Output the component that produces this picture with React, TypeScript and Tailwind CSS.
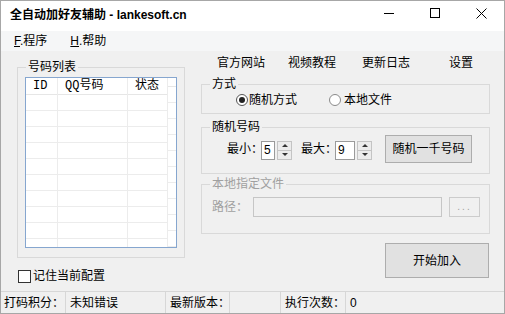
import React from 'react';

const rows = Array.from({ length: 10 });

function SpinBox({ value, width }: { value: string; width: string }) {
  return (
    <div className="flex items-center gap-[2px]">
      <div className={`${width} shrink-0 h-[19px] border border-[#9a9a9a] bg-white flex items-center pl-[2px] text-[12px]`}>
        {value}
      </div>
      <div className="w-[15px] shrink-0 h-[19px] border border-[#c4c4c4] bg-[#ececec] flex flex-col">
        <div className="flex-1 flex items-center justify-center border-b border-[#c4c4c4]">
          <div className="w-0 h-0 border-l-[3px] border-r-[3px] border-b-[3px] border-l-transparent border-r-transparent border-b-[#333]" />
        </div>
        <div className="flex-1 flex items-center justify-center">
          <div className="w-0 h-0 border-l-[3px] border-r-[3px] border-t-[3px] border-l-transparent border-r-transparent border-t-[#333]" />
        </div>
      </div>
    </div>
  );
}

function Column({ title, width, last }: { title: string; width: string; last?: boolean }) {
  return (
    <div className={`${width} shrink-0 flex flex-col ${last ? '' : 'border-r border-[#ececec]'}`}>
      <div className="h-[24px] border-b border-[#e6e6e6] flex items-center pl-[7px] text-[12px] font-['Liberation_Mono','Noto_Sans_CJK_SC',monospace]">
        {title}
      </div>
      {rows.map((_, i) => (
        <div key={i} className="h-[16px] shrink-0 border-b border-[#ececec]" />
      ))}
    </div>
  );
}

export default function App() {
  return (
    <div className="w-[505px] h-[314px] border border-[#a7a7a7] bg-[#f0f0f0] flex flex-col overflow-hidden text-[12px] leading-[16px] text-black font-['Liberation_Sans','Noto_Sans_CJK_SC',sans-serif]">
      {/* Title bar */}
      <div className="h-[30px] shrink-0 bg-white flex items-start">
        <div className="pl-[9px] pt-[6px] text-[12px] font-semibold">
          全自动加好友辅助 - <span className="font-bold">lankesoft.cn</span>
        </div>
        <div className="ml-auto flex">
          <div className="w-[46px] h-[24px] flex items-center justify-center">
            <div className="w-[10px] h-px bg-black" />
          </div>
          <div className="w-[46px] h-[24px] flex items-center justify-center">
            <div className="w-[10px] h-[10px] border border-black" />
          </div>
          <div className="w-[46px] h-[24px] flex items-center justify-center">
            <svg width="11" height="11" viewBox="0 0 11 11">
              <path d="M0.5 0.5 L10.5 10.5 M10.5 0.5 L0.5 10.5" stroke="black" strokeWidth="1" />
            </svg>
          </div>
        </div>
      </div>

      {/* Menu bar */}
      <div className="h-[20px] shrink-0 bg-[#f5f6f7] flex items-center">
        <span className="ml-[13px]"><span className="underline">F</span>.程序</span>
        <span className="ml-[23px]"><span className="underline">H</span>.帮助</span>
      </div>

      {/* Content */}
      <div className="flex-1 flex">
        {/* Left */}
        <div className="w-[200px] shrink-0 pl-[16px] pt-[8px]">
          <fieldset className="w-[168px] border border-[#d9d9d9] pl-[7px] pb-[9px]">
            <legend className="ml-[1px] px-[2px]">号码列表</legend>
            <div className="mt-[2px] w-[152px] h-[171px] border border-[#86a6cf] bg-white flex overflow-hidden">
              <Column title="ID" width="w-[32px]" />
              <Column title="QQ号码" width="w-[70px]" />
              <Column title="状态" width="w-[40px]" />
              <Column title="" width="w-[10px]" last />
            </div>
          </fieldset>
          <label className="mt-[10px] ml-[1px] flex items-center gap-[2px]">
            <span className="w-[13px] h-[13px] border border-[#333] bg-white" />
            <span>记住当前配置</span>
          </label>
        </div>

        {/* Right */}
        <div className="w-[289px] shrink-0">
          <div className="mt-[4px] flex pl-[16px]">
            <span>官方网站</span>
            <span className="ml-[23px]">视频教程</span>
            <span className="ml-[26px]">更新日志</span>
            <span className="ml-[39px]">设置</span>
          </div>

          <fieldset className="mt-[5px] border border-[#d9d9d9] pb-[5px]">
            <legend className="ml-[8px] px-[2px]">方式</legend>
            <div className="h-[16px] flex items-center pl-[34px]">
              <span className="w-[12px] h-[12px] rounded-full border border-[#555] bg-white flex items-center justify-center">
                <span className="w-[6px] h-[6px] rounded-full bg-[#222]" />
              </span>
              <span className="ml-[1px]">随机方式</span>
              <span className="ml-[32px] w-[12px] h-[12px] rounded-full border border-[#8a8a8a] bg-white" />
              <span className="ml-[3px]">本地文件</span>
            </div>
          </fieldset>

          <fieldset className="mt-[5px] border border-[#d9d9d9] pb-[10px]">
            <legend className="ml-[8px] px-[2px]">随机号码</legend>
            <div className="h-[28px] flex items-center pl-[25px]">
              <span>最小：</span>
              <div className="ml-[-2px] mt-[2px]"><SpinBox value="5" width="w-[14px]" /></div>
              <span className="ml-[9px]">最大：</span>
              <div className="ml-[-2px] mt-[2px]"><SpinBox value="9" width="w-[20px]" /></div>
              <button className="ml-[13px] w-[87px] h-[28px] border border-[#adadad] bg-[#e1e1e1] text-[12px]">
                随机一千号码
              </button>
            </div>
          </fieldset>

          <fieldset className="mt-[2px] border border-[#d9d9d9] pb-[16px] text-[#a0a0a0]">
            <legend className="ml-[8px] px-[2px]">本地指定文件</legend>
            <div className="mt-[5px] h-[20px] flex items-center pl-[10px]">
              <span className="shrink-0">路径：</span>
              <div className="ml-[5px] shrink-0 w-[189px] h-[20px] border border-[#c6c6c6] bg-[#f0f0f0]" />
              <div className="ml-[7px] shrink-0 w-[31px] h-[20px] border border-[#cccccc] bg-[#f0f0f0] flex items-center justify-center text-[10px] tracking-[2px]">
                ...
              </div>
            </div>
          </fieldset>

          <div className="mt-[9px] flex justify-end pr-[1px]">
            <button className="w-[104px] h-[35px] border border-[#adadad] bg-[#e1e1e1] text-[12px]">
              开始加入
            </button>
          </div>
        </div>
      </div>

      {/* Status bar */}
      <div className="h-[22px] shrink-0 border-t border-[#d7d7d7] flex items-stretch whitespace-nowrap">
        <div className="w-[65px] shrink-0 pl-[3px] flex items-center border-r border-[#d7d7d7]">打码积分：</div>
        <div className="w-[100px] shrink-0 pl-[4px] flex items-center border-r border-[#d7d7d7]">未知错误</div>
        <div className="w-[64px] shrink-0 pl-[4px] flex items-center border-r border-[#d7d7d7]">最新版本：</div>
        <div className="w-[51px] shrink-0 border-r border-[#d7d7d7]" />
        <div className="w-[65px] shrink-0 pl-[4px] flex items-center border-r border-[#d7d7d7]">执行次数：</div>
        <div className="pl-[4px] flex items-center">0</div>
      </div>
    </div>
  );
}
